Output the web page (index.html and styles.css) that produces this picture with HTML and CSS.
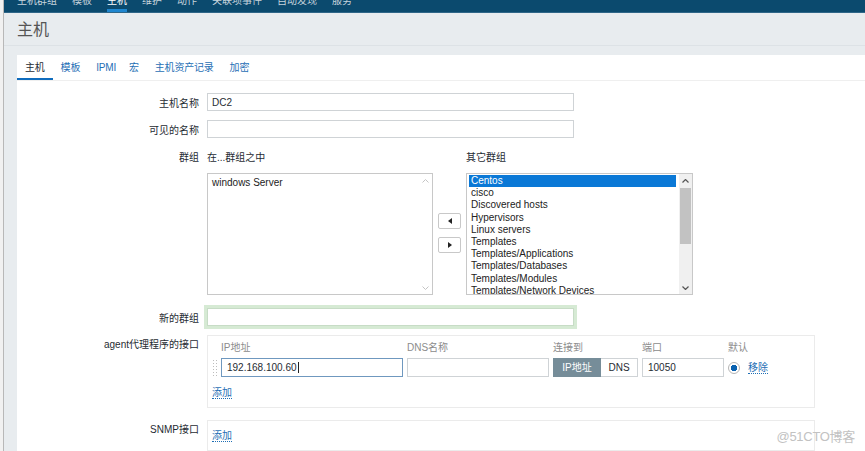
FILE: index.html
```html
<!DOCTYPE html>
<html lang="zh-CN">
<head>
<meta charset="utf-8">
<title>主机</title>
<link rel="stylesheet" href="styles.css">
</head>
<body>
<div class="page">
  <div class="gutter"></div>
  <div class="main">
    <nav class="topnav">
      <span>主机群组</span><span>模板</span><span class="active">主机</span><span>维护</span><span>动作</span><span>关联项事件</span><span>自动发现</span><span>服务</span>
    </nav>
    <header class="pagehead"><h1>主机</h1></header>
    <div class="band"></div>
    <div class="panel">
      <ul class="tabs">
        <li class="active">主机</li><li>模板</li><li class="narrow">IPMI</li><li>宏</li><li>主机资产记录</li><li>加密</li>
      </ul>
      <div class="form">
        <div class="row">
          <label class="lbl">主机名称</label>
          <input class="text wide" type="text" value="DC2">
        </div>
        <div class="row r2">
          <label class="lbl">可见的名称</label>
          <input class="text wide" type="text" value="">
        </div>
        <div class="row top r3">
          <label class="lbl hdr">群组</label>
          <div class="groups">
            <div class="gcol left">
              <div class="ghead">在...群组之中</div>
              <div class="listbox">
                <div class="items pad">
                  <div class="item">windows Server</div>
                </div>
                <div class="sb dis">
                  <div class="arr"><svg width="7" height="4" viewBox="0 0 7 4"><polyline points="0.5,3.5 3.5,0.5 6.5,3.5" fill="none" stroke="#c4c4c4" stroke-width="1"/></svg></div>
                  <div class="track"></div>
                  <div class="arr"><svg width="7" height="4" viewBox="0 0 7 4"><polyline points="0.5,0.5 3.5,3.5 6.5,0.5" fill="none" stroke="#c4c4c4" stroke-width="1"/></svg></div>
                </div>
              </div>
            </div>
            <div class="gmid">
              <button class="mv"><svg width="4" height="6" viewBox="0 0 4 6"><polygon points="4,0 4,6 0,3" fill="#222"/></svg></button>
              <button class="mv"><svg width="4" height="6" viewBox="0 0 4 6"><polygon points="0,0 0,6 4,3" fill="#222"/></svg></button>
            </div>
            <div class="gcol right">
              <div class="ghead">其它群组</div>
              <div class="listbox">
                <div class="items tight">
                  <div class="item sel">Centos</div>
                  <div class="item">cisco</div>
                  <div class="item">Discovered hosts</div>
                  <div class="item">Hypervisors</div>
                  <div class="item">Linux servers</div>
                  <div class="item">Templates</div>
                  <div class="item">Templates/Applications</div>
                  <div class="item">Templates/Databases</div>
                  <div class="item">Templates/Modules</div>
                  <div class="item">Templates/Network Devices</div>
                </div>
                <div class="sb">
                  <div class="arr"><svg width="7" height="4" viewBox="0 0 7 4"><polyline points="0.5,3.5 3.5,0.5 6.5,3.5" fill="none" stroke="#555" stroke-width="1.2"/></svg></div>
                  <div class="track"><div class="thumb"></div></div>
                  <div class="arr"><svg width="7" height="4" viewBox="0 0 7 4"><polyline points="0.5,0.5 3.5,3.5 6.5,0.5" fill="none" stroke="#555" stroke-width="1.2"/></svg></div>
                </div>
              </div>
            </div>
          </div>
        </div>
        <div class="row r4">
          <label class="lbl">新的群组</label>
          <input class="text wide glow" type="text" value="">
        </div>
        <div class="row top r5">
          <label class="lbl box-lbl">agent代理程序的接口</label>
          <div class="ibox">
            <div class="igrid">
              <span></span>
              <span class="ih">IP地址</span>
              <span class="ih">DNS名称</span>
              <span class="ih">连接到</span>
              <span class="ih">端口</span>
              <span class="ih">默认</span>
              <span class="handle"></span>
              <div class="text ip focus">192.168.100.60<span class="caret"></span></div>
              <input class="text dns" type="text" value="">
              <div class="seg"><span class="on">IP地址</span><span>DNS</span></div>
              <input class="text port" type="text" value="10050">
              <div class="def"><span class="radio"></span><a class="link">移除</a></div>
            </div>
            <a class="link add">添加</a>
          </div>
        </div>
        <div class="row top r6">
          <label class="lbl box-lbl">SNMP接口</label>
          <div class="ibox snmp">
            <a class="link">添加</a>
          </div>
        </div>
      </div>
    </div>
  </div>
  <div class="watermark">@51CTO博客</div>
</div>
</body>
</html>
```
FILE: styles.css
```css
* { box-sizing: border-box; }
html, body { margin: 0; padding: 0; }
body {
  font-family: "Liberation Sans", "Noto Sans CJK SC", sans-serif;
  font-size: 10px;
  color: #1f2c33;
  background: #fff;
  width: 865px;
  height: 451px;
  overflow: hidden;
}
.page { position: relative; display: flex; height: 451px; }
.gutter { width: 4px; background: #f1f1f1; border-right: 1px solid #b8b8b8; flex: none; }
.main { flex: 1; background: #e8ecef; display: flex; flex-direction: column; }

.topnav {
  height: 13px;
  background: #0b4a6e;
  border-bottom: 1px solid #2f6688;
  display: flex;
  gap: 15px;
  padding-left: 13px;
  overflow: hidden;
  flex: none;
}
.topnav span {
  display: block;
  height: 16px;
  margin-top: -5px;
  line-height: 12px;
  color: #c7d4dd;
  white-space: nowrap;
}
.topnav span.active { color: #fff; box-shadow: inset 0 -3px 0 #1f86cf; height: 17px; }

.pagehead {
  height: 33px;
  padding-left: 13px;
  border-bottom: 1px solid #dde2e6;
  flex: none;
}
.pagehead h1 {
  margin: 0;
  font-size: 16px;
  font-weight: normal;
  line-height: 33px;
  color: #555;
}
.band { height: 9px; flex: none; }

.panel { margin-left: 13px; background: #fff; flex: 1; }
.tabs {
  list-style: none;
  margin: 0;
  padding: 0;
  display: flex;
  height: 26px;
  border-bottom: 1px solid #efefef;
}
.tabs li {
  padding: 0 8px;
  line-height: 25px;
  height: 25px;
  color: #1f6fb5;
  letter-spacing: -0.2px;
}
.tabs li.narrow { padding-right: 5px; }
.tabs li.active { color: #1f2c33; box-shadow: inset 0 -2px 0 #0f6cbd; }

.form { padding-top: 12px; }
.row { display: flex; align-items: center; }
.row.top { align-items: flex-start; }
.lbl {
  width: 190px;
  padding-right: 8px;
  text-align: right;
  flex: none;
  color: #1f2c33;
  white-space: nowrap;
}
.lbl.hdr { padding-top: 4px; line-height: 14px; }
.lbl.box-lbl { padding-top: 4px; line-height: 12px; }
.r2 { margin-top: 9px; }
.r3 { margin-top: 9px; }
.r4 { margin-top: 13px; }
.r5 { margin-top: 9px; }
.r6 { margin-top: 12px; }

.text {
  font: inherit;
  font-size: 10px;
  color: #1f2c33;
  height: 18px;
  border: 1px solid #cfd3d6;
  background: #fff;
  padding: 0 4px;
  margin: 0;
  outline: none;
}
.wide { width: 367px; }
.glow { border-color: #c7dcc6; box-shadow: 0 0 0 3px #d6ead4; }

.groups { display: flex; gap: 5px; }
.gcol.left { width: 226px; }
.gcol.right { width: 227px; }
.ghead { padding-top: 4px; line-height: 14px; margin-bottom: 8px; color: #1f2c33; }
.listbox {
  height: 122px;
  border: 1px solid #c8c8c8;
  display: flex;
  background: #fff;
  overflow: hidden;
}
.items { flex: 1; overflow: hidden; }
.items.pad { padding: 3px 4px; }
.items.pad .item { line-height: 12px; }
.items.tight { padding: 1px 3px 0 2px; }
.item { line-height: 12.2px; white-space: nowrap; color: #222; }
.items.tight .item { padding-left: 2px; }
.item.sel { background: #0a78d6; color: #fff; }
.sb { width: 13px; display: flex; flex-direction: column; background: #f0f0f0; flex: none; }
.sb.dis { background: #fff; }
.arr { height: 13px; display: flex; align-items: center; justify-content: center; }
.track { flex: 1; padding-top: 1px; }
.thumb { height: 56px; background: #c2c2c2; margin: 0 1px; }

.gmid { width: 23px; padding-top: 66px; display: flex; flex-direction: column; gap: 8px; }
.mv {
  width: 23px;
  height: 16px;
  padding: 0;
  margin: 0;
  border: 1px solid #c8c8c8;
  border-radius: 2px;
  background: #fff;
  display: flex;
  align-items: center;
  justify-content: center;
}

.ibox {
  width: 608px;
  border: 1px solid #ebebeb;
  padding: 6px 0 8px 4px;
}
.igrid {
  display: grid;
  grid-template-columns: 5px 182px 142px 85px 82px auto;
  column-gap: 4px;
  row-gap: 4px;
  align-items: center;
}
.ih { line-height: 12px; color: #8c8c8c; }
.handle {
  width: 5px;
  height: 17px;
  background-image: radial-gradient(circle, #bdbdbd 0.8px, transparent 1px);
  background-size: 3px 3px;
}
.ip, .dns, .port { height: 19px; }
.ip { padding-left: 5px; line-height: 17px; border-color: #6f98bf; display: flex; align-items: center; }
.caret { display: inline-block; width: 1px; height: 11px; background: #222; margin-left: 1px; }
.dns { width: 142px; }
.port { width: 82px; padding-left: 5px; }
.seg { display: flex; height: 19px; }
.seg span {
  line-height: 17px;
  border: 1px solid #cfd3d6;
  text-align: center;
  color: #1f2c33;
}
.seg span.on { width: 48px; background: #768d99; border-color: #768d99; color: #fff; }
.seg span:last-child { width: 37px; border-left: none; }
.def { display: flex; align-items: center; gap: 8px; }
.radio {
  width: 12px;
  height: 12px;
  border-radius: 50%;
  border: 1px solid #b5b5b5;
  background: radial-gradient(circle, #0a62b0 0, #0a62b0 3px, #fff 3.5px);
}
.link {
  color: #1f6fb5;
  border-bottom: 1px dotted #1f6fb5;
  line-height: 11px;
  display: inline-block;
}
.add { margin-top: 10px; }
.snmp { padding: 9px 0 8px 4px; height: 31px; }

.watermark {
  position: absolute;
  right: 10px;
  top: 426px;
  font-size: 13px;
  color: #c2c2c2;
  letter-spacing: -0.3px;
}
```
